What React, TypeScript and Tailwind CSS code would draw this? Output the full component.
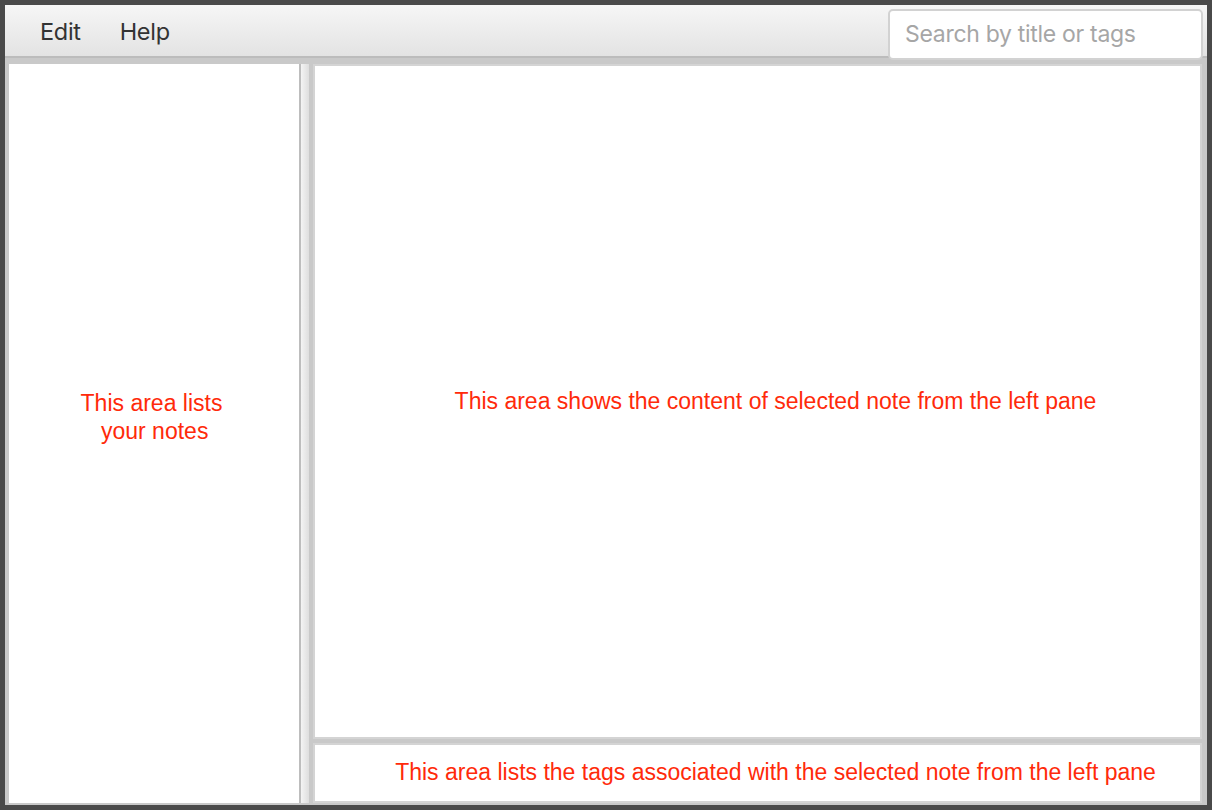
import React from "react";

export default function App() {
  return (
    <div
      className="w-[1212px] h-[810px] bg-[#4a4a4a] p-[5px] pr-[5px]"
      style={{ fontFamily: "'Liberation Sans', Arial, sans-serif" }}
    >
      <div className="w-full h-full flex flex-col bg-[#c9c9c9]">
        {/* Menu bar */}
        <div className="h-[53px] flex items-start bg-gradient-to-b from-[#f6f6f6] to-[#e3e3e3] border-b-2 border-[#bcbcbc] relative">
          <div
            className="flex items-center h-[52px] pt-[2px] pl-[35px] gap-[39px] text-[23.5px] text-[#333]"
            style={{ fontFamily: "Inter, 'Liberation Sans', sans-serif" }}
          >
            <span className="tracking-[-0.3px]">Edit</span>
            <span className="tracking-[-0.3px]">Help</span>
          </div>
          <div className="ml-auto mt-[4px] mr-[4px] w-[315px] h-[51px] bg-white border-2 border-[#d2d2d2] rounded-[5px] flex items-center pl-[15px] relative z-10">
            <span
              className="text-[23px] text-[#a6a6a6] tracking-[-0.3px]"
              style={{ fontFamily: "Inter, 'Liberation Sans', sans-serif" }}
            >
              Search by title or tags
            </span>
          </div>
        </div>

        {/* Body */}
        <div className="flex-1 flex pt-[6px] pb-[2px]">
          {/* Left pane */}
          <div className="ml-[4px] w-[290px] bg-white flex items-center justify-center">
            <div className="text-[23px] leading-[28px] text-[#ff2a0a] text-center -mt-[33px] pr-[5px]">
              This area lists
              <br />
              &nbsp;your notes
            </div>
          </div>

          {/* Divider */}
          <div className="w-[14px] flex">
            <div className="w-[2px] bg-[#bdbdbd]" />
            <div className="w-[8px] bg-gradient-to-r from-[#f4f4f4] to-[#dedede]" />
            <div className="w-[4px] bg-[#c9c9c9]" />
          </div>

          {/* Right column */}
          <div className="flex-1 flex flex-col mr-[5px]">
            <div className="flex-1 bg-white border-2 border-[#d4d4d4] flex items-center justify-center">
              <div className="text-[23px] text-[#ff2a0a] pl-[36px]">
                This area shows the content of selected note from the left pane
              </div>
            </div>
            <div className="h-[4px]" />
            <div className="h-[60px] bg-white border-2 border-[#d4d4d4] flex items-center justify-center">
              <div className="text-[23px] text-[#ff2a0a] pl-[36px] -mt-[2px]">
                This area lists the tags associated with the selected note from the left pane
              </div>
            </div>
          </div>
        </div>
      </div>
    </div>
  );
}
